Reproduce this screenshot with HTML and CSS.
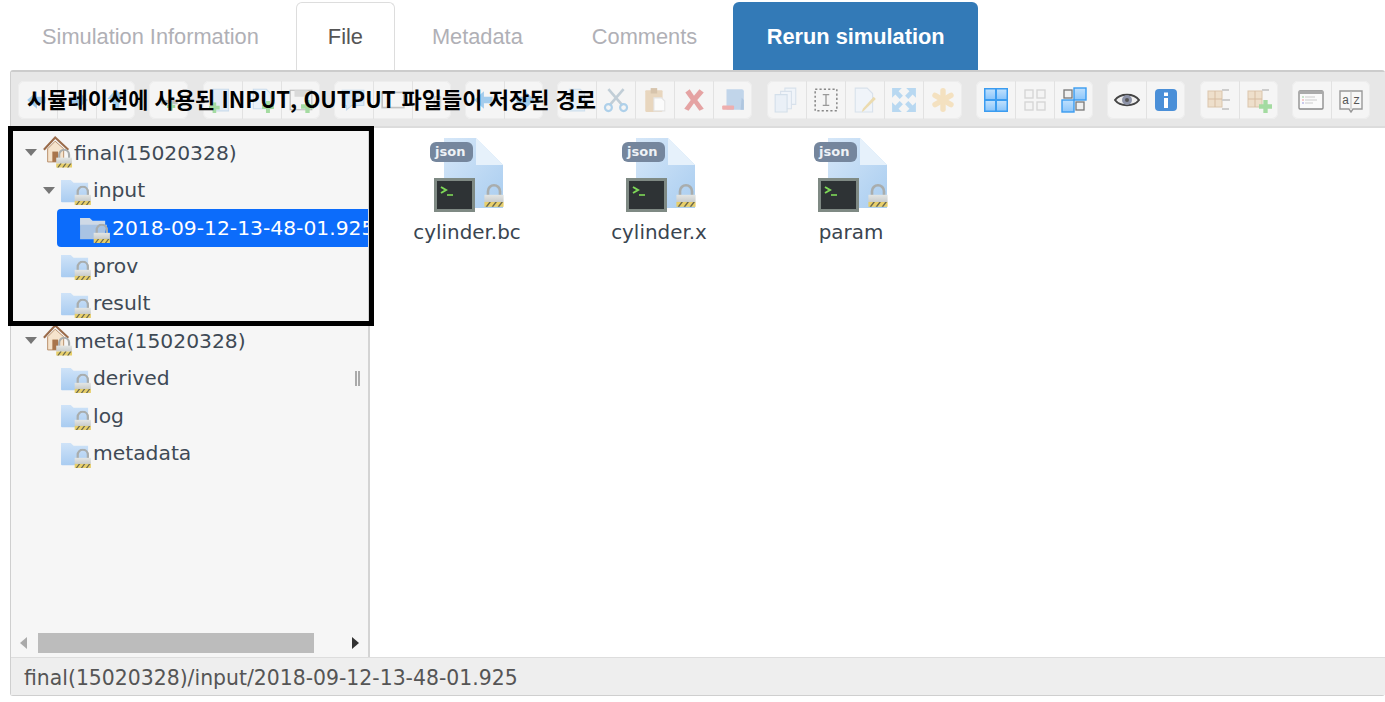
FILE: index.html
```html
<!DOCTYPE html>
<html lang="ko">
<head>
<meta charset="utf-8">
<title>Simulation File</title>
<link rel="stylesheet" href="styles.css">
</head>
<body>
<svg class="defs" width="0" height="0">
  <defs>
    <linearGradient id="fold" x1="0" y1="0" x2="0" y2="1"><stop offset="0" stop-color="#cfe3f8"/><stop offset="1" stop-color="#a9ccf1"/></linearGradient>
    <linearGradient id="page" x1="0" y1="0" x2="1" y2="1"><stop offset="0" stop-color="#d6e7f8"/><stop offset="1" stop-color="#a9cdf0"/></linearGradient>
    <linearGradient id="cell" x1="0" y1="0" x2="0" y2="1"><stop offset="0" stop-color="#bfe0fd"/><stop offset="1" stop-color="#8cc6fb"/></linearGradient>
    <linearGradient id="lockb" x1="0" y1="0" x2="0" y2="1"><stop offset="0" stop-color="#e4e6e4"/><stop offset="1" stop-color="#c9cccb"/></linearGradient>
    <symbol id="lock" viewBox="0 0 20 20">
      <path d="M5 10V6a5 5 0 0 1 10 0v4" fill="none" stroke="#a9adad" stroke-width="2.200"/>
      <rect x="2" y="9" width="16" height="6" fill="url(#lockb)"/>
      <rect x="2" y="15" width="16" height="4" fill="#e8cf6a"/>
      <path d="M3 19l3-4h1.500l-3 4zM8 19l3-4h1.500l-3 4zM13 19l3-4h1.500l-3 4z" fill="#6b6a50"/>
    </symbol>
    <symbol id="folder" viewBox="0 0 34 30">
      <path d="M1 3h10l3 3h15v20H2a1 1 0 0 1-1-1z" fill="url(#fold)"/>
      <use href="#lock" x="13" y="9" width="21" height="21"/>
    </symbol>
    <symbol id="folder-open" viewBox="0 0 34 30">
      <path d="M1 3h10l3 3h13v5H1z" fill="#cfd9e6"/>
      <path d="M1 10h28l-4 15H1z" fill="#a9c3e3"/>
      <use href="#lock" x="13" y="9" width="21" height="21"/>
    </symbol>
    <symbol id="home" viewBox="0 0 34 36">
      <path d="M2 15 14 2l14 13" fill="none" stroke="#9a6b4a" stroke-width="2.200"/>
      <path d="M6 14 14 6l9 8v14H6z" fill="#f5e3cc" stroke="#b58c66"/>
      <rect x="11" y="17" width="6" height="11" fill="#a8754c"/>
      <use href="#lock" x="13" y="14" width="21" height="21"/>
    </symbol>
    <symbol id="json" viewBox="0 0 75 76">
      <path d="M14 1h32l27 27v43H14z" fill="url(#page)"/>
      <path d="M46 1v27h27z" fill="#e6f1fb"/>
      <rect x="0" y="5" width="43" height="20" rx="6" fill="#75869d"/>
      <rect x="5.500" y="42.500" width="38" height="31" fill="#2e3335" stroke="#7f8a84" stroke-width="3"/>
      <path d="M11 50l5 3-5 3" fill="none" stroke="#7ed957" stroke-width="2"/>
      <path d="M17 58h6" stroke="#7ed957" stroke-width="1.600"/>
      <use href="#lock" x="52" y="46" width="24" height="26"/>
    </symbol>
    <symbol id="plus" viewBox="0 0 12 12"><path d="M4 0h4v4h4v4H8v4H4V8H0V4h4z" fill="#7fd07a"/></symbol>
    <symbol id="i-left" viewBox="0 0 24 24"><path d="M2 12l9-8v5h8v6h-8v5z" fill="#7cb9ea"/></symbol>
    <symbol id="i-right" viewBox="0 0 24 24"><path d="M22 12l-9-8v5H5v6h8v5z" fill="#7cb9ea"/></symbol>
    <symbol id="i-up" viewBox="0 0 24 24"><path d="M12 2l8 9h-5v9H9v-9H4z" fill="#7cb9ea"/></symbol>
    <symbol id="i-refresh" viewBox="0 0 24 24"><rect x="5" y="12" width="15" height="4" fill="#aaa"/><use href="#plus" x="10" y="14" width="8" height="8"/></symbol>
    <symbol id="i-doc-add" viewBox="0 0 24 24"><path d="M4 2h14v20H4z" fill="#dbe9f6" stroke="#b8d2ea"/><use href="#plus" x="0" y="14" width="10" height="10"/></symbol>
    <symbol id="i-doc-add2" viewBox="0 0 24 24"><path d="M4 2h12l4 4v14H4z" fill="#e6f0fa" stroke="#b8d2ea"/><use href="#plus" x="12" y="13" width="11" height="11"/></symbol>
    <symbol id="i-save" viewBox="0 0 24 24"><path d="M2 3h20v18H2z" fill="#f4f4f4" stroke="#999"/><rect x="6" y="3" width="12" height="6" fill="#ccc"/><use href="#plus" x="12" y="12" width="12" height="12"/></symbol>
    <symbol id="i-bubble" viewBox="0 0 24 24"><path d="M2 3h20v14H11l-5 4v-4H2z" fill="#cfe4f6" stroke="#a9cbe8"/></symbol>
    <symbol id="i-box" viewBox="0 0 24 24"><rect x="2" y="5" width="20" height="14" fill="#f5f5f5" stroke="#aaa" stroke-width="1.500"/></symbol>
    <symbol id="i-small" viewBox="0 0 24 24"><path d="M14 9h6v10h-6z" fill="#e2e2e2" stroke="#bbb"/></symbol>
    <symbol id="i-doc" viewBox="0 0 24 24"><path d="M5 2h10l4 4v16H5z" fill="#e3eef9" stroke="#bcd5ec"/></symbol>
    <symbol id="i-cut" viewBox="0 0 24 24"><path d="M5 2l13 15M19 2 6 17" stroke="#a9bcc9" stroke-width="2.400" fill="none"/><circle cx="5" cy="19" r="3.200" fill="none" stroke="#8dc0e6" stroke-width="2"/><circle cx="19" cy="19" r="3.200" fill="none" stroke="#8dc0e6" stroke-width="2"/></symbol>
    <symbol id="i-paste" viewBox="0 0 24 24"><rect x="3" y="3" width="16" height="20" rx="1" fill="#e3c8a5"/><rect x="8" y="1" width="6" height="5" fill="#c9ad8a"/><path d="M11 10h7l3 3v9H11z" fill="#fff" stroke="#ddd"/></symbol>
    <symbol id="i-x" viewBox="0 0 24 24"><path d="M4 5l4-3 4 6 5-6 4 3-6 7 6 8-4 2-5-7-5 7-4-2 6-8z" fill="#de7d7d"/></symbol>
    <symbol id="i-fminus" viewBox="0 0 24 24"><path d="M6 2h14a2 2 0 0 1 2 2v17H6z" fill="#a9c6e6"/><path d="M20 10l2 2v9h-3z" fill="#8fb1d6"/><rect x="2" y="17" width="11" height="4" rx="1" fill="#ec8d8d"/></symbol>
    <symbol id="i-copies" viewBox="0 0 24 24"><path d="M11 1h10v15H11z" fill="#eef4fb" stroke="#cbd9e8"/><path d="M7 4h10v16H7z" fill="#eef4fb" stroke="#cbd9e8"/><path d="M2 7h11v16H2z" fill="#e6eff8" stroke="#c3d5e6"/></symbol>
    <symbol id="i-rename" viewBox="0 0 24 24"><rect x="2" y="2" width="20" height="20" fill="none" stroke="#888" stroke-dasharray="2 2" stroke-width="1.400"/><path d="M9 7h6M9 17h6M12 7v10" stroke="#999" stroke-width="1.200"/></symbol>
    <symbol id="i-edit" viewBox="0 0 24 24"><path d="M3 1h11l5 5v17H3z" fill="#eef4fb" stroke="#cbd9e8"/><path d="M22 11 11 22l-2 1 1-3L20 9z" fill="#e7cf8f"/></symbol>
    <symbol id="i-expand" viewBox="0 0 24 24"><path d="M1 1h9L7 4l4 4-3 3-4-4-3 3zM23 1v9l-3-3-4 4-3-3 4-4-3-3zM1 23v-9l3 3 4-4 3 3-4 4 3 3zM23 23h-9l3-3-4-4 3-3 4 4 3-3z" fill="#9ccbf0"/></symbol>
    <symbol id="i-star" viewBox="0 0 24 24"><g fill="#f4d9a8"><rect x="9.500" y="1" width="5" height="22" rx="2.500"/><rect x="9.500" y="1" width="5" height="22" rx="2.500" transform="rotate(60 12 12)"/><rect x="9.500" y="1" width="5" height="22" rx="2.500" transform="rotate(-60 12 12)"/></g></symbol>
    <symbol id="i-grid" viewBox="0 0 26 26"><rect x="1" y="1" width="24" height="24" fill="#3b9cf0"/><g fill="url(#cell)"><rect x="2.500" y="2.500" width="9.500" height="9.500"/><rect x="14" y="2.500" width="9.500" height="9.500"/><rect x="2.500" y="14" width="9.500" height="9.500"/><rect x="14" y="14" width="9.500" height="9.500"/></g></symbol>
    <symbol id="i-grid-off" viewBox="0 0 26 26"><g fill="#f4f4f4" stroke="#d6d6d6" stroke-width="1.400"><rect x="3" y="3" width="8" height="8"/><rect x="15" y="3" width="8" height="8"/><rect x="3" y="15" width="8" height="8"/><rect x="15" y="15" width="8" height="8"/></g></symbol>
    <symbol id="i-grid-mix" viewBox="0 0 26 26"><rect x="3" y="3" width="8" height="8" fill="#f0f0f0" stroke="#777" stroke-width="1.300"/><rect x="15" y="15" width="8" height="8" fill="#f0f0f0" stroke="#777" stroke-width="1.300"/><rect x="13" y="1" width="12" height="12" fill="url(#cell)" stroke="#3b9cf0" stroke-width="1.400"/><rect x="1" y="13" width="12" height="12" fill="url(#cell)" stroke="#3b9cf0" stroke-width="1.400"/></symbol>
    <symbol id="i-eye" viewBox="0 0 26 26"><path d="M1 13c5-7 19-7 24 0-5 7-19 7-24 0z" fill="#eee" stroke="#444" stroke-width="2"/><circle cx="13" cy="13" r="5" fill="#8d93a8"/><circle cx="13" cy="13" r="2" fill="#555"/></symbol>
    <symbol id="i-info" viewBox="0 0 26 26"><rect x="2" y="2" width="22" height="22" rx="4" fill="#4a8fd8"/><rect x="11" y="5.500" width="4" height="3.500" fill="#fff"/><rect x="11" y="11" width="4" height="10" fill="#fff"/></symbol>
    <symbol id="i-arch" viewBox="0 0 26 26"><rect x="2" y="4" width="14" height="16" fill="#ecd5b8" stroke="#cfb08c"/><path d="M2 12h14M9 4v16" stroke="#c9a27a"/><path d="M16 3h7M16 13h8M16 22h7" stroke="#bbb" stroke-width="2"/></symbol>
    <symbol id="i-arch-add" viewBox="0 0 26 26"><rect x="2" y="4" width="14" height="16" fill="#ecd5b8" stroke="#cfb08c"/><path d="M2 12h14M9 4v16" stroke="#c9a27a"/><path d="M16 3h7" stroke="#bbb" stroke-width="2"/><use href="#plus" x="13" y="13" width="13" height="13"/></symbol>
    <symbol id="i-win" viewBox="0 0 26 26"><rect x="1" y="4" width="24" height="18" rx="1" fill="#fafafa" stroke="#888" stroke-width="1.300"/><rect x="1" y="4" width="24" height="3" fill="#aaa"/><path d="M4 10h2" stroke="#9c9"/><path d="M7 10h10M7 13h12M7 16h8" stroke="#ccc"/><path d="M4 13h2" stroke="#e99"/><path d="M4 16h2" stroke="#99d"/></symbol>
    <symbol id="i-az" viewBox="0 0 26 26"><path d="M2 4h22v18H15l-2 3-2-3H2z" fill="#f7f7f7" stroke="#999" stroke-width="1.400"/><path d="M13 4v18" stroke="#bbb"/><text x="7.500" y="17" font-size="12" text-anchor="middle" fill="#555" font-family="Liberation Mono">a</text><text x="18.500" y="17" font-size="12" text-anchor="middle" fill="#555" font-family="Liberation Mono">z</text></symbol>
  </defs>
</svg>

<nav class="tabs">
  <a class="tab">Simulation Information</a>
  <a class="tab active">File</a>
  <a class="tab metadata">Metadata</a>
  <a class="tab comments">Comments</a>
  <a class="tab rerun">Rerun simulation</a>
</nav>

<main class="manager">
  <div class="toolbar">
    <div class="group"><span class="btn"><svg class="ico"><use href="#i-left"/></svg></span><span class="btn"><svg class="ico"><use href="#i-right"/></svg></span><span class="btn"><svg class="ico"><use href="#i-up"/></svg></span></div>
    <div class="group"><span class="btn"><svg class="ico"><use href="#i-refresh"/></svg></span></div>
    <div class="group"><span class="btn"><svg class="ico"><use href="#i-doc-add"/></svg></span><span class="btn"><svg class="ico"><use href="#i-doc-add2"/></svg></span><span class="btn"><svg class="ico"><use href="#i-save"/></svg></span></div>
    <div class="group"><span class="btn"><svg class="ico"><use href="#i-bubble"/></svg></span><span class="btn"><svg class="ico"><use href="#i-box"/></svg></span><span class="btn"><svg class="ico"><use href="#i-small"/></svg></span></div>
    <div class="group"><span class="btn"><svg class="ico"><use href="#i-left"/></svg></span><span class="btn"><svg class="ico"><use href="#i-right"/></svg></span></div>
    <div class="group"><span class="btn"><svg class="ico"><use href="#i-doc"/></svg></span><span class="btn"><svg class="ico"><use href="#i-cut"/></svg></span><span class="btn"><svg class="ico"><use href="#i-paste"/></svg></span><span class="btn"><svg class="ico"><use href="#i-x"/></svg></span><span class="btn"><svg class="ico"><use href="#i-fminus"/></svg></span></div>
    <div class="group"><span class="btn"><svg class="ico"><use href="#i-copies"/></svg></span><span class="btn"><svg class="ico on"><use href="#i-rename"/></svg></span><span class="btn"><svg class="ico"><use href="#i-edit"/></svg></span><span class="btn"><svg class="ico"><use href="#i-expand"/></svg></span><span class="btn"><svg class="ico"><use href="#i-star"/></svg></span></div>
    <div class="group"><span class="btn"><svg class="ico on"><use href="#i-grid"/></svg></span><span class="btn"><svg class="ico on"><use href="#i-grid-off"/></svg></span><span class="btn"><svg class="ico on"><use href="#i-grid-mix"/></svg></span></div>
    <div class="group"><span class="btn"><svg class="ico on"><use href="#i-eye"/></svg></span><span class="btn"><svg class="ico on"><use href="#i-info"/></svg></span></div>
    <div class="group"><span class="btn"><svg class="ico"><use href="#i-arch"/></svg></span><span class="btn"><svg class="ico"><use href="#i-arch-add"/></svg></span></div>
    <div class="group"><span class="btn"><svg class="ico on"><use href="#i-win"/></svg></span><span class="btn"><svg class="ico on"><use href="#i-az"/></svg></span></div>
  </div>

  <div class="workspace">
    <aside class="sidebar">
      <ul class="tree">
        <li class="node root"><i class="arrow"></i><svg class="home"><use href="#home"/></svg><span>final(15020328)</span></li>
        <li class="node lvl1"><i class="arrow"></i><svg class="fold"><use href="#folder"/></svg><span>input</span></li>
        <li class="node lvl2 selected"><svg class="fold"><use href="#folder-open"/></svg><span>2018-09-12-13-48-01.925</span></li>
        <li class="node lvl1 leaf"><svg class="fold"><use href="#folder"/></svg><span>prov</span></li>
        <li class="node lvl1 leaf"><svg class="fold"><use href="#folder"/></svg><span>result</span></li>
        <li class="node root"><i class="arrow"></i><svg class="home"><use href="#home"/></svg><span>meta(15020328)</span></li>
        <li class="node lvl1 leaf"><svg class="fold"><use href="#folder"/></svg><span>derived</span></li>
        <li class="node lvl1 leaf"><svg class="fold"><use href="#folder"/></svg><span>log</span></li>
        <li class="node lvl1 leaf"><svg class="fold"><use href="#folder"/></svg><span>metadata</span></li>
      </ul>
      <div class="grip"></div>
      <div class="hscroll"><i class="sc-left"></i><div class="sc-track"><div class="sc-thumb"></div></div><i class="sc-right"></i></div>
    </aside>
    <section class="files">
      <figure class="file"><svg class="json"><use href="#json"/></svg><span class="json-tag">json</span><figcaption>cylinder.bc</figcaption></figure>
      <figure class="file"><svg class="json"><use href="#json"/></svg><span class="json-tag">json</span><figcaption>cylinder.x</figcaption></figure>
      <figure class="file"><svg class="json"><use href="#json"/></svg><span class="json-tag">json</span><figcaption>param</figcaption></figure>
    </section>
  </div>

  <footer class="status">final(15020328)/input/2018-09-12-13-48-01.925</footer>

  <div class="callout-box"></div>
  <div class="callout-text">시뮬레이션에 사용된 INPUT, OUTPUT 파일들이 저장된 경로</div>
</main>
</body>
</html>
```
FILE: styles.css
```css
* { box-sizing: border-box; }
html, body { margin: 0; padding: 0; height: 702px; overflow: hidden; background: #fff; }
body { font-family: "DejaVu Sans", sans-serif; color: #444; }
.defs { position: absolute; }

.tabs { display: flex; height: 70px; padding: 2px 0 0 11px; font-family: "Liberation Sans", Arial, sans-serif; font-size: 21.800px; }
.tab { display: flex; align-items: center; padding: 0 30px; height: 68px; color: #b0b0b6; border: 1px solid transparent; border-bottom: 0; border-radius: 6px 6px 0 0; }
.tab.active { color: #555; background: #fff; border-color: #ddd; margin-left: 6px; padding: 0; width: 99px; justify-content: center; }
.tab.metadata { margin-left: 6px; }
.tab.comments { margin-left: 7px; }
.tab.rerun { margin-left: 5px; width: 245px; justify-content: center; padding: 0; background: #337ab7; color: #fff; font-weight: 700; }

.manager { position: relative; margin-left: 10px; height: 626px; display: flex; flex-direction: column; border: 1px solid #cfcfcf; border-top: 2px solid #ccc; border-right: 0; border-radius: 3px; }

.toolbar { display: flex; height: 56px; flex: none; gap: 14.300px; padding: 9px 0 0 7px; background: #e7e7e7; border-bottom: 2px solid #dcdcdc; }
.group { display: flex; height: 38px; background: #f5f5f5; border-radius: 6px; box-shadow: inset 0 0 0 1px #ededed; flex: none; }
.btn { width: 39px; display: flex; align-items: center; justify-content: center; border-left: 1px solid #e2e2e2; }
.btn:first-child { border-left: 0; }
.ico { width: 26px; height: 26px; opacity: .68; }
.ico.on { opacity: 1; }

.workspace { flex: 1; display: flex; min-height: 0; }
.sidebar { position: relative; width: 359px; flex: none; background: #f6f6f6; border-right: 2px solid #d4d4d4; overflow: hidden; display: flex; flex-direction: column; }
.tree { list-style: none; margin: 0; padding: 6px 0 0; flex: 1; font-size: 20.300px; white-space: nowrap; color: #3f4a55; }
.node { display: flex; align-items: center; height: 37.500px; position: relative; }
.root { padding-left: 14px; }
.lvl1 { padding-left: 32px; }
.lvl1.leaf { padding-left: 49px; }
.lvl2 { padding-left: 22px; margin-left: 46px; width: 330px; height: 38px; }
.selected { background: #0c6cfb; color: #fff; border-radius: 4px; }
.arrow { flex: none; width: 0; height: 0; border-left: 6px solid transparent; border-right: 6px solid transparent; border-top: 7px solid #777; margin-right: 5px; }
.home { width: 32px; height: 35px; flex: none; margin-right: 0; }
.fold { width: 33px; height: 29px; flex: none; margin-top: 2px; }
.grip { position: absolute; left: 344px; top: 243px; width: 5px; height: 15px; border-left: 2px solid #aaa; border-right: 2px solid #aaa; }
.hscroll { flex: none; height: 26px; margin-bottom: 1px; display: flex; align-items: center; padding: 0 9px; }
.sc-left { width: 0; height: 0; border-top: 6px solid transparent; border-bottom: 6px solid transparent; border-right: 7px solid #aaa; }
.sc-right { width: 0; height: 0; border-top: 6px solid transparent; border-bottom: 6px solid transparent; border-left: 7px solid #333; }
.sc-track { flex: 1; padding: 0 36px 0 11px; }
.sc-thumb { height: 20px; background: #bcbcbc; width: 276px; }

.files { flex: 1; display: flex; align-items: flex-start; padding: 9px 0 0 1px; background: #fff; }
.file { position: relative; width: 192px; margin: 0; display: flex; flex-direction: column; align-items: center; font-size: 19.900px; color: #3a4550; }
.json { width: 75px; height: 76px; }
.json-tag { position: absolute; left: 64px; top: 7px; font-size: 13px; font-weight: 700; color: #eef2f6; }
.file figcaption { margin-top: 8px; }

.status { flex: none; height: 38px; display: flex; align-items: center; padding: 3px 0 0 13px; background: #eee; border-top: 1px solid #ddd; font-size: 20.400px; color: #555; }

.callout-box { position: absolute; left: -3px; top: 54px; width: 366px; height: 200px; border: 5px solid #000; pointer-events: none; }
.callout-text { position: absolute; left: 16px; top: 11px; font-family: "Noto Sans CJK KR", "Noto Sans", sans-serif; font-size: 22px; font-weight: 700; color: #000; white-space: nowrap; line-height: 30px; }
```
